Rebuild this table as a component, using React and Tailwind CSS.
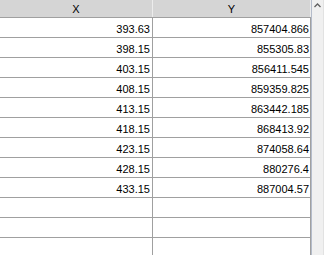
import React from "react";

const ROWS = [
  ["393.63", "857404.866"],
  ["398.15", "855305.83"],
  ["403.15", "856411.545"],
  ["408.15", "859359.825"],
  ["413.15", "863442.185"],
  ["418.15", "868413.92"],
  ["423.15", "874058.64"],
  ["428.15", "880276.4"],
  ["433.15", "887004.57"],
  ["", ""],
  ["", ""],
  ["", ""],
];

const App = () => {
  return (
    <div
      className="w-[324px] h-[255px] overflow-hidden flex bg-white text-[11px] text-black"
      style={{ fontFamily: '"Liberation Sans", Arial, sans-serif' }}
    >
      {/* Grid */}
      <div className="w-[311px] flex flex-col">
        <div className="grid grid-cols-[153px_158px] h-[18px] shrink-0 bg-[#d5d5d5] border-b border-[#a0a0a0]">
          <div className="border-r border-[#ececec] flex items-center justify-center pt-[2px] leading-none">
            X
          </div>
          <div className="border-r border-[#ececec] flex items-center justify-center pt-[2px] leading-none">
            Y
          </div>
        </div>

        {ROWS.map((r, i) => (
          <div
            key={i}
            className="grid grid-cols-[153px_158px] h-[20px] shrink-0 border-b border-[#a0a0a0]"
          >
            <div className="border-r border-[#a0a0a0] flex items-center justify-end pr-[2px] pt-[3px] leading-none">
              {r[0]}
            </div>
            <div className="border-r border-[#a0a0a0] flex items-center justify-end pr-[1px] pt-[3px] leading-none">
              {r[1]}
            </div>
          </div>
        ))}
      </div>

      {/* Scrollbar */}
      <div className="w-[13px] h-full bg-[#f0f0f0] border-l border-r border-l-[#b4bccb] border-r-[#e2e2e2] flex flex-col">
        <div className="h-[11px] flex items-center justify-center">
          <svg width="7" height="5" viewBox="0 0 7 5">
            <path d="M0.5 4 L3.5 1 L6.5 4" stroke="#606060" strokeWidth="1.3" fill="none" />
          </svg>
        </div>
      </div>
    </div>
  );
};

export default App;
